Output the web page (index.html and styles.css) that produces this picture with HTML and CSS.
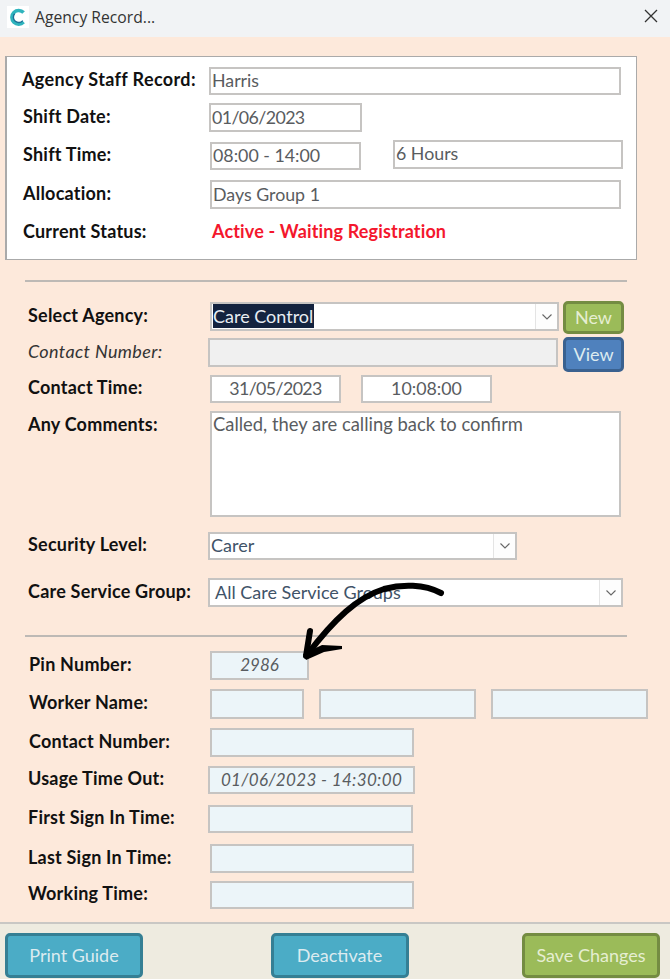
FILE: index.html
```html
<!DOCTYPE html>
<html lang="en">
<head>
    <meta charset="UTF-8">
    <meta name="viewport" content="width=device-width, initial-scale=1.0">
    <title>Agency Record</title>
    <link rel="stylesheet" href="styles.css">
</head>
<body>
    <div class="window">
        <div class="titlebar">
            <div class="logo">
                <svg width="22" height="22" viewBox="0 0 22 22">
                    <path d="M16.6 6.6A6.8 6.8 0 1 0 16.6 16" fill="none" stroke="#2fb4bd" stroke-width="3.6"/>
                    <path d="M7.6 7.8A5 5 0 0 0 15.8 14.6" fill="none" stroke="#1d6f96" stroke-width="1.4"/>
                </svg>
            </div>
            <div class="title">Agency Record...</div>
            <svg class="close" width="14" height="14" viewBox="0 0 14 14">
                <path d="M1 1L13 13M13 1L1 13" stroke="#333" stroke-width="1.3" fill="none"/>
            </svg>
        </div>

        <div class="main">
            <div class="panel">
                <div class="row staff-row">
                    <div class="lbl">Agency Staff Record:</div>
                    <div class="field w-412">Harris</div>
                </div>
                <div class="row date-row">
                    <div class="lbl lbl-in">Shift Date:</div>
                    <div class="field w-153 date">01/06/2023</div>
                </div>
                <div class="row time-row">
                    <div class="lbl lbl-in">Shift Time:</div>
                    <div class="field w-151 push-1">08:00 - 14:00</div>
                    <div class="field hours">6 Hours</div>
                </div>
                <div class="row alloc-row">
                    <div class="lbl lbl-in">Allocation:</div>
                    <div class="field w-411 push-1">Days Group 1</div>
                </div>
                <div class="row status-row">
                    <div class="lbl lbl-in">Current Status:</div>
                    <div class="status">Active - Waiting Registration</div>
                </div>
            </div>

            <div class="divider first"></div>

            <div class="form">
                <div class="row agency-row">
                    <div class="lbl">Select Agency:</div>
                    <div class="field combo w-349">
                        <span class="selected">Care Control</span>
                        <span class="drop"><svg width="10" height="6" viewBox="0 0 10 6"><path d="M.5 .5L5 5L9.5 .5" fill="none" stroke="#666" stroke-width="1.1"/></svg></span>
                    </div>
                    <div class="btn small green">New</div>
                </div>
                <div class="row number-row">
                    <div class="lbl italic">Contact Number:</div>
                    <div class="field grey w-350 pull-2"></div>
                    <div class="btn small blue view">View</div>
                </div>
                <div class="row contact-time-row">
                    <div class="lbl">Contact Time:</div>
                    <div class="field w-131 centre date">31/05/2023</div>
                    <div class="field w-131 centre gap-20">10:08:00</div>
                </div>
                <div class="row comment-row">
                    <div class="lbl">Any Comments:</div>
                    <div class="field w-411 comment">Called, they are calling back to confirm</div>
                </div>
                <div class="row security-row">
                    <div class="lbl">Security Level:</div>
                    <div class="field combo w-309 pull-2">
                        <span>Carer</span>
                        <span class="drop"><svg width="10" height="6" viewBox="0 0 10 6"><path d="M.5 .5L5 5L9.5 .5" fill="none" stroke="#666" stroke-width="1.1"/></svg></span>
                    </div>
                </div>
                <div class="row group-row">
                    <div class="lbl">Care Service Group:</div>
                    <div class="field combo w-415 pull-2 group">
                        <span>All Care Service Groups</span>
                        <span class="drop"><svg width="10" height="6" viewBox="0 0 10 6"><path d="M.5 .5L5 5L9.5 .5" fill="none" stroke="#666" stroke-width="1.1"/></svg></span>
                    </div>
                </div>
            </div>

            <div class="divider second"></div>

            <div class="form">
                <div class="row pin-row">
                    <div class="lbl lbl-in">Pin Number:</div>
                    <div class="field pale w-99 centre italic">2986</div>
                </div>
                <div class="row worker-row">
                    <div class="lbl lbl-in">Worker Name:</div>
                    <div class="field pale w-94"></div>
                    <div class="field pale w-157 gap-15"></div>
                    <div class="field pale w-157 gap-15"></div>
                </div>
                <div class="row contact2-row">
                    <div class="lbl lbl-in">Contact Number:</div>
                    <div class="field pale w-204"></div>
                </div>
                <div class="row usage-row">
                    <div class="lbl">Usage Time Out:</div>
                    <div class="field pale w-207 pull-2 centre italic usage">01/06/2023 - 14:30:00</div>
                </div>
                <div class="row first-row">
                    <div class="lbl">First Sign In Time:</div>
                    <div class="field pale w-205 pull-2"></div>
                </div>
                <div class="row last-row">
                    <div class="lbl">Last Sign In Time:</div>
                    <div class="field pale w-204"></div>
                </div>
                <div class="row working-row">
                    <div class="lbl">Working Time:</div>
                    <div class="field pale w-204"></div>
                </div>
            </div>
        </div>

        <div class="footer">
            <div class="btn big teal">Print Guide</div>
            <div class="btn big teal deactivate">Deactivate</div>
            <div class="btn big green">Save Changes</div>
        </div>

        <svg class="arrow" width="155" height="90" viewBox="295 575 155 90">
            <path d="M441 593C424 584 402 584 384 589C358 597 334 619 307 655" fill="none" stroke="#000" stroke-width="6" stroke-linecap="round"/>
            <path d="M310 631L306 656" fill="none" stroke="#000" stroke-width="6" stroke-linecap="round"/>
            <path d="M303 654L322 645L342 646L342 649L324 652L306 660Z" fill="#000"/>
        </svg>
    </div>
</body>
</html>
```

FILE: styles.css
```css
* {
    margin: 0;
    padding: 0;
    box-sizing: border-box;
}
body {
    background-color: #fde9db;
    font-family: "Lato", "Liberation Sans", sans-serif;
}
.window {
    position: relative;
    display: flex;
    flex-direction: column;
    width: 670px;
    height: 979px;
    overflow: hidden;
}

/* title bar */
.titlebar {
    display: flex;
    align-items: center;
    flex: 0 0 37px;
    padding-left: 7px;
    background-color: #f1f3f5;
}
.logo {
    width: 22px;
    height: 22px;
    margin-bottom: 4px;
    background-color: #fff;
}
.title {
    margin-left: 6px;
    margin-bottom: 3px;
    font-family: "Open Sans", sans-serif;
    font-size: 15.7px;
    color: #333;
}
.close {
    margin-left: auto;
    margin-right: 12px;
    margin-bottom: 5px;
}

/* main area */
.main {
    flex: 1;
    padding-top: 19px;
}
.panel {
    width: 632px;
    height: 204px;
    margin-left: 5px;
    padding-left: 15px;
    background-color: #fff;
    border: 1px solid #aaa;
    border-left-width: 2px;
}
.divider {
    width: 602px;
    height: 2px;
    margin-left: 25px;
    background-color: #bdb9b5;
}
.divider.first {
    margin-top: 20px;
}
.divider.second {
    margin-top: 28px;
}
.form {
    padding-left: 28px;
}
.row {
    display: flex;
    align-items: flex-start;
}
.lbl {
    flex: 0 0 auto;
    width: 182px;
    height: 100%;
    display: flex;
    align-items: center;
    padding-bottom: 4px;
    font-size: 18px;
    font-weight: 700;
    letter-spacing: .22px;
    color: #111;
}
.panel .lbl {
    width: 187px;
}
.staff-row .lbl {
    letter-spacing: .37px;
}
.lbl-in {
    padding-left: 1px;
}
.lbl.italic {
    font-weight: 400;
    font-style: italic;
    letter-spacing: .37px;
    color: #333;
}

/* row positions */
.staff-row { height: 28px; margin-top: 10px; }
.date-row { height: 29px; margin-top: 8px; }
.time-row { height: 28px; margin-top: 10px; }
.alloc-row { height: 29px; margin-top: 10px; }
.status-row { height: 28px; margin-top: 8px; }
.agency-row { height: 29px; margin-top: 20px; }
.number-row { height: 29px; margin-top: 7px; }
.contact-time-row { height: 28px; margin-top: 8px; }
.comment-row { height: 106px; margin-top: 8px; }
.security-row { height: 28px; margin-top: 15px; }
.group-row { height: 29px; margin-top: 18px; }
.pin-row { height: 29px; margin-top: 14px; }
.worker-row { height: 30px; margin-top: 9px; }
.contact2-row { height: 29px; margin-top: 9px; }
.usage-row { height: 28px; margin-top: 9px; }
.first-row { height: 28px; margin-top: 11px; }
.last-row { height: 29px; margin-top: 11px; }
.working-row { height: 28px; margin-top: 8px; }

.status-row .lbl {
    padding-bottom: 1px;
}
.comment-row .lbl {
    align-items: flex-start;
    padding-top: 2px;
}

/* fields */
.field {
    flex: 0 0 auto;
    display: flex;
    align-items: center;
    height: 100%;
    padding: 0 1px 2px;
    font-size: 17.8px;
    color: #595c60;
    background-color: #fff;
    border: 2px solid #c6c4c2;
}
.grey { background-color: #f0f0f0; }
.pale { background-color: #ecf5f9; }
.centre { justify-content: center; }
.field.italic {
    font-size: 17px;
    font-style: italic;
}
.date {
    letter-spacing: -.6px;
}
.usage {
    letter-spacing: .35px;
}
.comment {
    align-items: flex-start;
    padding-top: 0;
    font-size: 18.4px;
}
.w-94 { width: 94px; }
.w-99 { width: 99px; }
.w-131 { width: 131px; }
.w-151 { width: 151px; }
.w-153 { width: 153px; }
.w-157 { width: 157px; }
.w-204 { width: 204px; }
.w-205 { width: 205px; }
.w-207 { width: 207px; }
.w-309 { width: 309px; }
.w-349 { width: 349px; }
.w-350 { width: 350px; }
.w-411 { width: 411px; }
.w-412 { width: 412px; }
.w-415 { width: 415px; }
.push-1 { margin-left: 1px; }
.pull-2 { margin-left: -2px; }
.gap-15 { margin-left: 15px; }
.gap-20 { margin-left: 20px; }
.hours {
    width: 230px;
    height: 29px;
    margin-left: 32px;
    margin-top: -2px;
    padding-bottom: 3px;
}
.status {
    padding-left: 3px;
    padding-bottom: 1px;
    font-size: 18px;
    font-weight: 700;
    letter-spacing: .15px;
    color: #f4172d;
    align-self: center;
}
.combo {
    justify-content: space-between;
    padding-right: 0;
    padding-bottom: 0;
    font-size: 18px;
    color: #3f5368;
}
.combo > span:first-child {
    margin-bottom: 2px;
}
.group {
    padding-left: 5px;
}
.selected {
    padding-right: 1px;
    line-height: 24px;
    color: #e8edf3;
    background-color: #14233f;
}
.drop {
    display: flex;
    align-items: center;
    justify-content: center;
    width: 22px;
    height: 100%;
    background-color: #fdfdfd;
    border-left: 1px solid #e4e4e4;
}

/* buttons */
.btn {
    display: flex;
    align-items: center;
    justify-content: center;
    flex: 0 0 auto;
    padding-bottom: 2px;
    color: #dcebf0;
    border-style: solid;
    border-radius: 5px;
}
.small {
    width: 61px;
    height: 33px;
    margin-left: 4px;
    margin-top: -1px;
    font-size: 18px;
    border-width: 3px;
}
.view {
    height: 35px;
    margin-left: 5px;
}
.big {
    width: 138px;
    height: 45px;
    font-size: 18px;
    border-width: 3px;
}
.deactivate {
    margin-left: 14px;
}
.green {
    color: #e6eed2;
    background-color: #9bbb59;
    border-color: #748c42;
}
.blue {
    background-color: #4f81bd;
    border-color: #3a618f;
}
.teal {
    background-color: #4bacc6;
    border-color: #357f94;
}

/* footer */
.footer {
    display: flex;
    justify-content: space-between;
    align-items: flex-start;
    flex: 0 0 57px;
    padding: 9px 10px 0 5px;
    background-color: #eeebe0;
    border-top: 2px solid #c9c7c4;
}

/* hand drawn arrow over the form */
.arrow {
    position: absolute;
    left: 295px;
    top: 575px;
}
```
